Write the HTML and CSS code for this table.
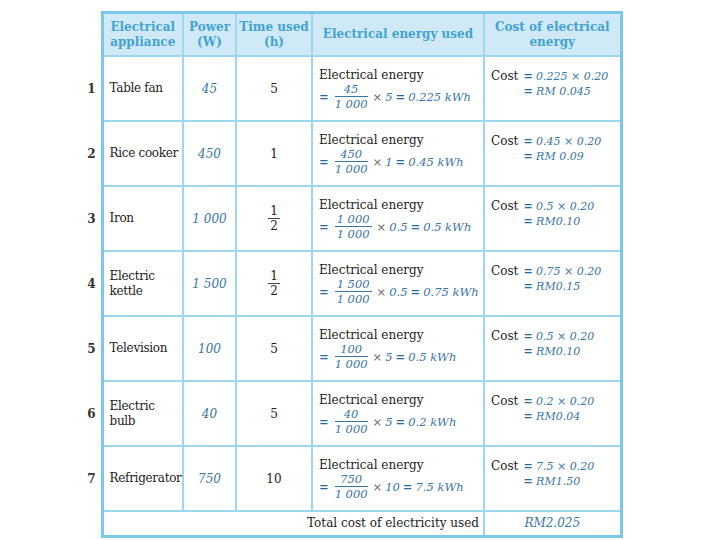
FILE: index.html
```html
<!DOCTYPE html>
<html>
<head>
<meta charset="utf-8">
<link rel="stylesheet" href="styles.css">
</head>
<body>
<div class="page">
<table class="tbl">
<colgroup>
<col class="c-num"><col class="c-app"><col class="c-pw"><col class="c-tm"><col class="c-en"><col class="c-cost">
</colgroup>
<thead>
<tr class="head">
<th class="num"></th>
<th>Electrical<br>appliance</th>
<th>Power<br>(W)</th>
<th>Time used<br>(h)</th>
<th>Electrical energy used</th>
<th>Cost of electrical<br>energy</th>
</tr>
</thead>
<tbody>
<tr>
<td class="num">1</td><td class="app">Table fan</td><td class="pw">45</td><td class="tm">5</td>
<td class="en"><div class="lbl">Electrical energy</div><div class="eq"><span class="op">=</span><span class="frac"><span class="n">45</span><span class="d">1 000</span></span><span class="x">×</span><i>5</i><span class="op">=</span><i>0.225 kWh</i></div></td>
<td class="cost"><div class="cg"><span>Cost</span><span><span class="op">=</span> <i>0.225 × 0.20</i></span><span></span><span><span class="op">=</span> <i>RM 0.045</i></span></div></td>
</tr>
<tr>
<td class="num">2</td><td class="app">Rice cooker</td><td class="pw">450</td><td class="tm">1</td>
<td class="en"><div class="lbl">Electrical energy</div><div class="eq"><span class="op">=</span><span class="frac"><span class="n">450</span><span class="d">1 000</span></span><span class="x">×</span><i>1</i><span class="op">=</span><i>0.45 kWh</i></div></td>
<td class="cost"><div class="cg"><span>Cost</span><span><span class="op">=</span> <i>0.45 × 0.20</i></span><span></span><span><span class="op">=</span> <i>RM 0.09</i></span></div></td>
</tr>
<tr>
<td class="num">3</td><td class="app">Iron</td><td class="pw">1 000</td><td class="tm"><span class="hf"><span>1</span><span>2</span></span></td>
<td class="en"><div class="lbl">Electrical energy</div><div class="eq"><span class="op">=</span><span class="frac"><span class="n">1 000</span><span class="d">1 000</span></span><span class="x">×</span><i>0.5</i><span class="op">=</span><i>0.5 kWh</i></div></td>
<td class="cost"><div class="cg"><span>Cost</span><span><span class="op">=</span> <i>0.5 × 0.20</i></span><span></span><span><span class="op">=</span> <i>RM0.10</i></span></div></td>
</tr>
<tr>
<td class="num">4</td><td class="app">Electric<br>kettle</td><td class="pw">1 500</td><td class="tm"><span class="hf"><span>1</span><span>2</span></span></td>
<td class="en"><div class="lbl">Electrical energy</div><div class="eq"><span class="op">=</span><span class="frac"><span class="n">1 500</span><span class="d">1 000</span></span><span class="x">×</span><i>0.5</i><span class="op">=</span><i>0.75 kWh</i></div></td>
<td class="cost"><div class="cg"><span>Cost</span><span><span class="op">=</span> <i>0.75 × 0.20</i></span><span></span><span><span class="op">=</span> <i>RM0.15</i></span></div></td>
</tr>
<tr>
<td class="num">5</td><td class="app">Television</td><td class="pw">100</td><td class="tm">5</td>
<td class="en"><div class="lbl">Electrical energy</div><div class="eq"><span class="op">=</span><span class="frac"><span class="n">100</span><span class="d">1 000</span></span><span class="x">×</span><i>5</i><span class="op">=</span><i>0.5 kWh</i></div></td>
<td class="cost"><div class="cg"><span>Cost</span><span><span class="op">=</span> <i>0.5 × 0.20</i></span><span></span><span><span class="op">=</span> <i>RM0.10</i></span></div></td>
</tr>
<tr>
<td class="num">6</td><td class="app">Electric<br>bulb</td><td class="pw">40</td><td class="tm">5</td>
<td class="en"><div class="lbl">Electrical energy</div><div class="eq"><span class="op">=</span><span class="frac"><span class="n">40</span><span class="d">1 000</span></span><span class="x">×</span><i>5</i><span class="op">=</span><i>0.2 kWh</i></div></td>
<td class="cost"><div class="cg"><span>Cost</span><span><span class="op">=</span> <i>0.2 × 0.20</i></span><span></span><span><span class="op">=</span> <i>RM0.04</i></span></div></td>
</tr>
<tr>
<td class="num">7</td><td class="app">Refrigerator</td><td class="pw">750</td><td class="tm">10</td>
<td class="en"><div class="lbl">Electrical energy</div><div class="eq"><span class="op">=</span><span class="frac"><span class="n">750</span><span class="d">1 000</span></span><span class="x">×</span><i>10</i><span class="op">=</span><i>7.5 kWh</i></div></td>
<td class="cost"><div class="cg"><span>Cost</span><span><span class="op">=</span> <i>7.5 × 0.20</i></span><span></span><span><span class="op">=</span> <i>RM1.50</i></span></div></td>
</tr>
<tr class="total">
<td class="num"></td>
<td class="tlabel" colspan="4">Total cost of electricity used</td>
<td class="tval"><i>RM2.025</i></td>
</tr>
</tbody>
</table>
</div>
</body>
</html>
```
FILE: styles.css
```css
html, body {
  margin: 0;
  padding: 0;
  background: #ffffff;
}
.page {
  padding: 11px 0 0 80px;
}
.tbl {
  border-collapse: collapse;
  table-layout: fixed;
  width: 541px;
  font-family: "DejaVu Serif", serif;
  font-size: 12px;
  color: #222222;
}
.c-num { width: 22px; }
.c-app { width: 81px; }
.c-pw { width: 53px; }
.c-tm { width: 76px; }
.c-en { width: 172px; }
.c-cost { width: 137px; }

.tbl th, .tbl td {
  border: 2px solid #9ed6ee;
  padding: 0;
}
.tbl th.num, .tbl td.num {
  border: none;
  background: #ffffff;
}
.head th {
  background: #cfe9f7;
  color: #43a3d0;
  font-weight: bold;
  height: 41px;
  line-height: 15px;
  vertical-align: middle;
  text-align: center;
  border-top: 3px solid #7cc8e8;
}
.head th:nth-child(2) { border-left: 3px solid #7cc8e8; }
.head th:last-child, .tbl td.cost, .tbl td.tval { border-right: 3px solid #7cc8e8; }
.tbl td.app, .tbl td.tlabel { border-left: 3px solid #7cc8e8; }
.total td { border-bottom: 3px solid #7cc8e8; }
.total td.num { border-bottom: none; }

.tbl tbody tr { height: 65px; }
.tbl tbody tr.total { height: 25px; }

td.num {
  text-align: right;
  padding-right: 5px;
  font-weight: bold;
  color: #333333;
  vertical-align: middle;
}
td.app {
  padding-left: 6px;
  vertical-align: middle;
  line-height: 15px;
  letter-spacing: -0.3px;
}
td.pw {
  text-align: center;
  vertical-align: middle;
  font-style: italic;
  color: #3a76a6;
}
td.tm {
  text-align: center;
  vertical-align: middle;
}
.hf {
  display: inline-flex;
  flex-direction: column;
  align-items: center;
  line-height: 14px;
}
.hf span:first-child {
  border-bottom: 1px solid #444444;
  padding: 0 2px;
}

td.en {
  vertical-align: top;
  padding: 11px 0 0 6px;
}
.lbl { line-height: 14px; }
.eq {
  display: flex;
  align-items: center;
  gap: 3px;
  font-size: 11.5px;
}
.eq i {
  color: #3a76a6;
}
.op {
  color: #2a6a99;
  font-weight: bold;
}
.x { color: #666666; }
.frac {
  display: inline-flex;
  flex-direction: column;
  align-items: center;
  font-style: italic;
  color: #3a76a6;
  line-height: 14px;
  margin: 0 2px 0 3px;
}
.frac .n {
  border-bottom: 1px solid #3a76a6;
  align-self: stretch;
  text-align: center;
  padding: 0 2px;
}

td.cost {
  vertical-align: top;
  padding: 12px 0 0 6px;
  font-size: 11px;
}
.cg {
  display: grid;
  grid-template-columns: auto auto;
  justify-content: start;
  column-gap: 5px;
  line-height: 15px;
}
.cg > span:first-child { font-size: 12px; }
.cg i { color: #3a76a6; }

td.tlabel {
  text-align: right;
  padding-right: 4px;
  vertical-align: middle;
}
td.tval {
  text-align: center;
  vertical-align: middle;
  color: #3a76a6;
}
```
